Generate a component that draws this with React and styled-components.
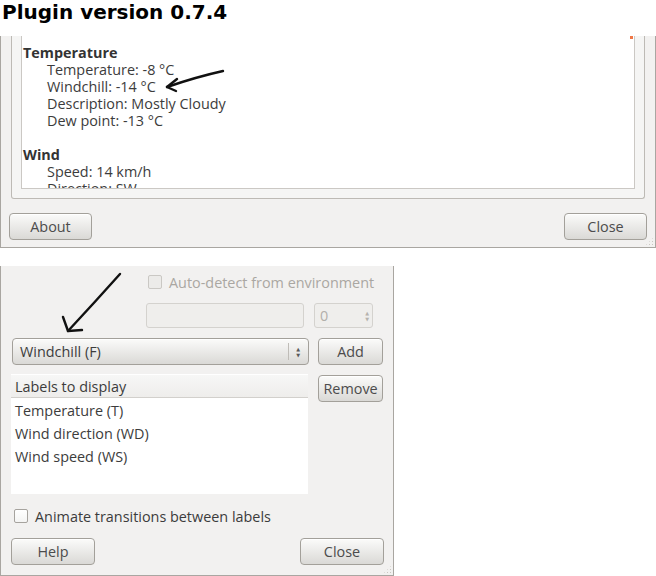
import styled, { createGlobalStyle } from 'styled-components';

const GlobalStyle = createGlobalStyle`
  html, body {
    margin: 0;
    padding: 0;
    background: #ffffff;
  }
  body {
    font-family: "Open Sans", "DejaVu Sans", sans-serif;
    font-size: 14.4px;
    color: #3c3c3c;
  }
`;

const Page = styled.div`
  position: relative;
  width: 656px;
  height: 576px;
  display: flex;
  flex-direction: column;
  align-items: flex-start;
  overflow: hidden;
`;

const Title = styled.h1`
  margin: 0 0 12px 2px;
  padding-top: 1px;
  font-family: "DejaVu Sans", sans-serif;
  font-weight: bold;
  font-size: 20px;
  line-height: 23px;
  color: #000;
`;

const Window = styled.div`
  position: relative;
  box-sizing: border-box;
  width: ${(p) => p.$width}px;
  height: ${(p) => p.$height}px;
  background: #f2f1f0;
  border: 1px solid #a9a6a1;
  border-top: none;
  display: flex;
  flex-direction: column;
`;

const InfoWindow = styled(Window)`
  padding: 0 8px 7px;
`;

const ConfigWindow = styled(Window)`
  margin-top: 18px;
  padding: 9px 10px 9px;
`;

const Grip = styled.div`
  position: absolute;
  right: 1px;
  bottom: 1px;
  width: 9px;
  height: 9px;
  background-image: radial-gradient(circle, #c9c6c1 0.8px, transparent 1px);
  background-size: 3px 3px;
  clip-path: polygon(100% 0, 100% 100%, 0 100%);
`;

const Frame = styled.div`
  box-sizing: border-box;
  height: 163px;
  margin: 0 2px;
  padding: 0 9px 9px;
  background: #f5f5f4;
  border: 1px solid #bdbab5;
  border-top: none;
  border-radius: 0 0 3px 3px;
`;

const ScrollArea = styled.div`
  position: relative;
  box-sizing: border-box;
  height: 153px;
  padding: 8px 0 0 1px;
  background: #ffffff;
  border: 1px solid #cbc8c4;
  border-top: none;
  overflow: hidden;
  line-height: 17px;
`;

const Marker = styled.span`
  position: absolute;
  top: 0;
  right: 1px;
  width: 3px;
  height: 3px;
  background: #f07746;
`;

const Section = styled.div`
  margin-bottom: 17px;
`;

const SectionTitle = styled.div`
  font-weight: bold;
  color: #333;
`;

const Entry = styled.div`
  padding-left: 24px;
  white-space: nowrap;
`;

const ButtonRow = styled.div`
  display: flex;
  justify-content: space-between;
  margin-top: ${(p) => p.$top || 0}px;
  margin-right: ${(p) => p.$right || 0}px;
`;

const Button = styled.button`
  box-sizing: border-box;
  width: ${(p) => p.$width || 83}px;
  height: 27px;
  margin-top: ${(p) => p.$top || 0}px;
  padding: 0;
  border: 1px solid #a3a09a;
  border-radius: 4px;
  background: linear-gradient(#fbfbfa, #dad9d6);
  box-shadow: inset 0 1px 0 #ffffff;
  font-family: "Open Sans", sans-serif;
  font-size: 14.4px;
  color: #4c4c4c;
`;

const CheckRow = styled.label`
  display: flex;
  align-items: center;
  gap: 7px;
  height: 14px;
  margin-left: ${(p) => p.$left}px;
  margin-top: ${(p) => p.$top || 0}px;
  color: ${(p) => (p.$disabled ? '#aaa7a2' : '#3c3c3c')};
  white-space: nowrap;
`;

const Box = styled.span`
  box-sizing: border-box;
  flex: none;
  width: 14px;
  height: 14px;
  border-radius: 2px;
  border: 1px solid ${(p) => (p.$disabled ? '#cac8c4' : '#a6a39e')};
  background: ${(p) => (p.$disabled ? '#ecebe9' : 'linear-gradient(#ffffff, #f4f4f3)')};
`;

const FieldRow = styled.div`
  display: flex;
  height: 25px;
  margin-top: 14px;
  margin-left: 135px;
  gap: 10px;
`;

const Field = styled.div`
  box-sizing: border-box;
  width: ${(p) => p.$width}px;
  height: 25px;
  border: 1px solid #d4d2ce;
  border-radius: 3px;
  background: #efeeec;
  display: flex;
  align-items: center;
  justify-content: space-between;
  padding: 0 3px 0 5px;
  color: #b2afaa;
`;

const SpinArrows = styled.span`
  display: flex;
  flex-direction: column;
  font-size: 5px;
  line-height: 6px;
  color: #b6b3ae;
`;

const ComboRow = styled.div`
  display: flex;
  gap: 9px;
  margin-top: 10px;
  margin-left: 1px;
`;

const Combo = styled.div`
  box-sizing: border-box;
  width: 297px;
  height: 27px;
  border: 1px solid #a3a09a;
  border-radius: 4px;
  background: linear-gradient(#fbfbfa, #dad9d6);
  box-shadow: inset 0 1px 0 #ffffff;
  display: flex;
  align-items: center;
  padding-left: 7px;
`;

const ComboText = styled.span`
  flex: 1;
`;

const ComboSep = styled.span`
  width: 1px;
  height: 17px;
  background: #bfbcb7;
  margin-right: 7px;
`;

const ComboArrows = styled(SpinArrows)`
  color: #5a5a5a;
  margin-right: 8px;
`;

const ListRow = styled.div`
  display: flex;
  align-items: flex-start;
  gap: 10px;
  margin-top: 9px;
`;

const List = styled.div`
  width: 298px;
  height: 120px;
  background: #ffffff;
`;

const ListHeader = styled.div`
  box-sizing: border-box;
  height: 24px;
  padding-left: 4px;
  line-height: 23px;
  background: linear-gradient(#f7f7f6, #eeedeb);
  border-top: 1px solid #ffffff;
  border-bottom: 1px solid #d2d0cc;
`;

const ListBody = styled.div`
  padding-top: 1px;
`;

const ListItem = styled.div`
  height: 23px;
  line-height: 23px;
  padding-left: 4px;
`;

const Overlay = styled.svg`
  position: absolute;
  top: 0;
  left: 0;
  pointer-events: none;
`;

const weather = [
  {
    title: 'Temperature',
    rows: ['Temperature: -8 °C', 'Windchill: -14 °C', 'Description: Mostly Cloudy', 'Dew point: -13 °C'],
  },
  { title: 'Wind', rows: ['Speed: 14 km/h', 'Direction: SW'] },
];

const labels = ['Temperature (T)', 'Wind direction (WD)', 'Wind speed (WS)'];

const App = () => (
  <Page>
    <GlobalStyle />
    <Title>Plugin version 0.7.4</Title>

    <InfoWindow $width={656} $height={212}>
      <Frame>
        <ScrollArea>
          <Marker />
          {weather.map((s) => (
            <Section key={s.title}>
              <SectionTitle>{s.title}</SectionTitle>
              {s.rows.map((r) => (
                <Entry key={r}>{r}</Entry>
              ))}
            </Section>
          ))}
        </ScrollArea>
      </Frame>
      <ButtonRow $top={14}>
        <Button>About</Button>
        <Button>Close</Button>
      </ButtonRow>
      <Grip />
    </InfoWindow>

    <ConfigWindow $width={394} $height={310}>
      <CheckRow $left={137} $disabled>
        <Box $disabled />
        Auto-detect from environment
      </CheckRow>
      <FieldRow>
        <Field $width={158} />
        <Field $width={59}>
          0
          <SpinArrows>
            <span>▲</span>
            <span>▼</span>
          </SpinArrows>
        </Field>
      </FieldRow>
      <ComboRow>
        <Combo>
          <ComboText>Windchill (F)</ComboText>
          <ComboSep />
          <ComboArrows>
            <span>▲</span>
            <span>▼</span>
          </ComboArrows>
        </Combo>
        <Button $width={65}>Add</Button>
      </ComboRow>
      <ListRow>
        <List>
          <ListHeader>Labels to display</ListHeader>
          <ListBody>
            {labels.map((l) => (
              <ListItem key={l}>{l}</ListItem>
            ))}
          </ListBody>
        </List>
        <Button $width={65} $top={1}>Remove</Button>
      </ListRow>
      <CheckRow $left={3} $top={15}>
        <Box />
        Animate transitions between labels
      </CheckRow>
      <ButtonRow $top={15} $right={-1}>
        <Button $width={84}>Help</Button>
        <Button $width={84}>Close</Button>
      </ButtonRow>
      <Grip />
    </ConfigWindow>

    <Overlay width="656" height="576" viewBox="0 0 656 576">
      <g fill="none" stroke="#111" strokeWidth="2.4" strokeLinecap="round" strokeLinejoin="round">
        <path d="M223 71 Q196 77 167 87" />
        <path d="M177 79 L167 87 L176 91" />
        <path d="M120 274 Q95 302 68 331" />
        <path d="M63 317 L68 331 L82 330" />
      </g>
    </Overlay>
  </Page>
);

export default App;
